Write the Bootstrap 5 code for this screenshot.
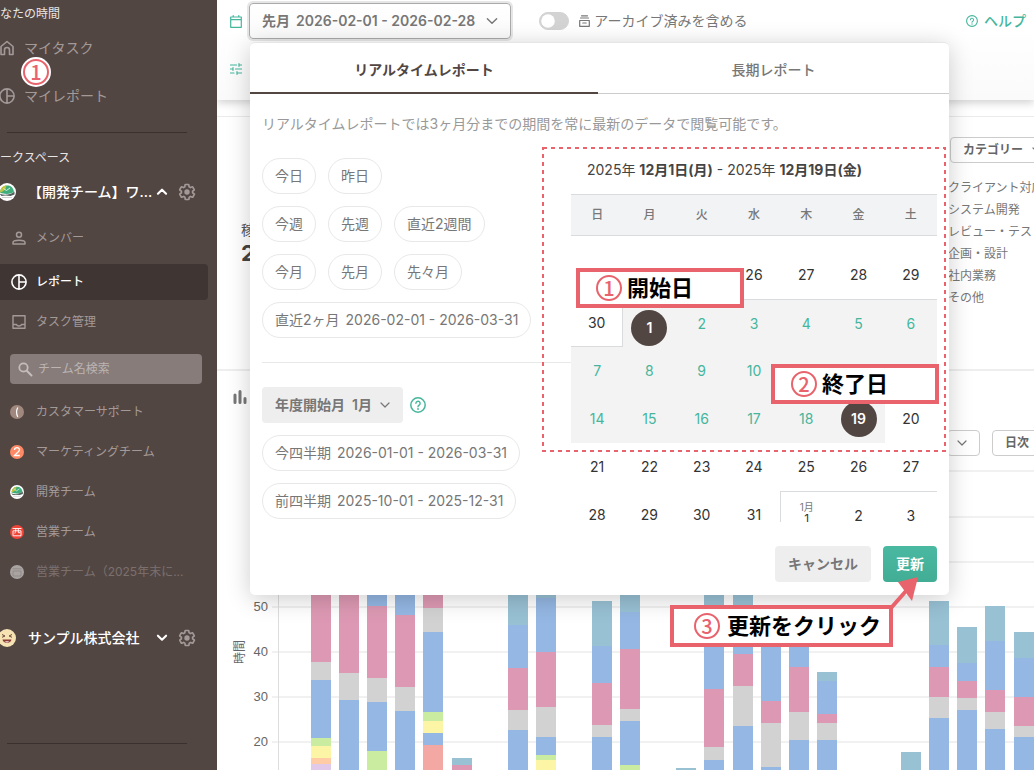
<!DOCTYPE html>
<html lang="ja">
<head>
<meta charset="utf-8">
<meta name="viewport" content="width=device-width, initial-scale=1">
<title>レポート</title>
<link href="https://cdn.jsdelivr.net/npm/bootstrap@5.3.0/dist/css/bootstrap.min.css" rel="stylesheet">
<style>
:root{--brown:#524643;--teal:#45b69d;--red:#e8636c;--line:#ebebeb}
body{font-family:Inter,"Noto Sans CJK JP",sans-serif;font-size:14px;line-height:20px;color:#777;background:#fff}
svg{flex:none;display:block}
.ln{fill:none;stroke:currentColor;stroke-linecap:round;stroke-linejoin:round}
a{text-decoration:none;color:inherit}
.side{width:217px;background:var(--brown);color:#a39a98;flex:none}
.side hr{margin:0 30px 0 7px;border-top:1px solid #3a302e;opacity:1}
.side-title{font-size:12px;color:#e8e5e4;height:28px}
.side-title.space{height:48px;padding-top:2px}
.side-main{height:40px;gap:9px}
.side-head{color:#fff;font-weight:500;height:22px;padding-right:21px;margin-bottom:17px}
.side-head.org{margin:35px 0 94px}
.side-head .face{margin-left:-2px}
.side-head .name{margin-left:12px;white-space:nowrap}
.side-head .act{margin:0 8px 0 auto}
.side-head .gear{color:#a39a98;margin-left:1px}
.side-item{height:36px;font-size:12px;padding-left:12px;gap:10px;margin-right:9px;border-radius:0 4px 4px 0}
.side-item.current{background:#3f3533;color:#fff;font-weight:500;padding-left:11px;gap:9px}
.team{height:40px;font-size:12px;padding-left:10px;gap:12px}
.team.faded{opacity:.5}
.search-box{margin:14px 15px 0 10px;height:30px}
.search-box input{height:30px;background:#877c7a;border:0;border-radius:4px;font-size:12px;color:#fff;padding:0 8px 2px 28px}
.search-box input::placeholder{color:#bbb4b2;opacity:1}
.search-box svg{left:8px;top:8px;color:#c3bdbb}
.main{min-width:0}
.top{height:100px;padding:3px 8px 0 13px;background:linear-gradient(#fff 30%,#fafafa);box-shadow:0 3px 8px rgba(0,0,0,.18)}
.top-row{height:36px}
.top-row + .top-row{margin-top:12px}
.teal{color:var(--teal)}
.period-btn{height:36px;padding:0 11px 0 12px;margin-left:7px;border:1px solid #aaa;box-shadow:0 0 0 2px #e6e6e6;border-radius:4px;background:linear-gradient(#fff,#fafafa);font-size:14px;font-weight:600;color:#777;line-height:20px}
.period-btn svg{margin-left:10px}
.form-switch .form-check-input.arch{width:30px;height:18px;margin:0;background-color:#d3d3d3;border-color:#d3d3d3;float:none;background-image:url("data:image/svg+xml,%3csvg xmlns='http://www.w3.org/2000/svg' viewBox='-4 -4 8 8'%3e%3ccircle r='3.4' fill='%23fff'/%3e%3c/svg%3e")}
.arch-label{padding-left:10px}
.summary{margin-top:16px;border-top:1px solid var(--line);height:253px}
.total{padding:103px 0 0 24px;line-height:20px;color:#555}
.total b{display:block;font-size:22px;line-height:26px;color:#444;font-weight:700}
.right-col{width:87px;flex:none}
.form-select{background-image:url("data:image/svg+xml,%3csvg xmlns='http://www.w3.org/2000/svg' viewBox='0 0 12 12'%3e%3cpath d='M2 4l4 4 4-4' fill='none' stroke='%23777' stroke-width='1.2' stroke-linecap='round' stroke-linejoin='round'/%3e%3c/svg%3e")}
.mini{height:26px;font-size:12px;line-height:16px;font-weight:600;color:#666;border:1px solid #ccc;border-radius:4px;padding:0 28px 0 12px;flex:none;background-color:#fff;background-size:12px 12px}
.cat-pick{width:106px;margin:20px 0 0 3px}
.legend-list{font-size:12px;line-height:22px;margin:14px 0 0 1px;white-space:nowrap;color:#777}
.chart-sec{border-top:2px solid #eee}
.chart-head{height:52px;padding-left:15px}
.chart-tools{gap:12px;height:26px;margin:7px 0 4px}
.mini.unit-pick{width:33px;padding:0;background-position:right 11px center}
.mini.step-pick{width:72px}
.pop{left:33px;top:42px;width:699px;height:553px;background:#fff;border-top:1px solid #e6e6e6;border-radius:5px;box-shadow:0 4px 24px rgba(0,0,0,.2);z-index:5}
.tab-btn{height:51px;border:0;border-bottom:1px solid #ccc;background:none;padding:4px 0 0;font-weight:500;color:#777}
.tab-btn.on{width:348px;border-bottom:2px solid var(--brown);font-weight:700;color:var(--brown)}
.note{margin:20px 12px 24px;color:#999}
.chips{width:321px;padding-left:12px;flex:none}
.chip-row{gap:12px;margin-bottom:12px}
.chip{height:36px;padding:0 12px;border:1px solid #e8e8e8;border-radius:18px;background:#fff;color:#777;white-space:nowrap}
.soft{height:36px;border:0;border-radius:4px;background-color:#eee;font-weight:600;color:#777;padding:0 13px}
.year-pick{width:141px;background-size:12px 12px;background-position:right 12px center;font-size:14px;line-height:20px;padding-left:13px}
.rule{height:1px;background:#e8e8e8;margin:24px 0}
.cal-side{width:366px;flex:none}
.cal-title{color:#444;padding-left:16px;line-height:24px}
.cal-title b{font-weight:700}
.cal-box{height:328px;overflow:hidden;margin-top:12px}
.cal{table-layout:fixed;width:100%;border-collapse:separate;border-spacing:0;text-align:center;color:#333}
.cal th{height:42px;background:#f2f3f5;border:solid #d9dbdd;border-width:1px 0;font-size:12px;font-weight:500;color:#777}
.cal td{height:48px;padding:0;vertical-align:middle}
.cal .gap td{height:15px}
.cal .in{background:#f3f3f3;color:var(--teal)}
.cal .bt{border-top:1px solid #d9dbdd}
.cal .last{border-right:1px solid #d9dbdd;border-bottom:1px solid #d9dbdd}
.cal .bl{border-left:1px solid #d9dbdd}
.cal .dot{display:inline-flex;width:36px;height:36px;border-radius:50%;background:var(--brown);color:#fff;font-weight:600;align-items:center;justify-content:center;vertical-align:middle}
.cal .dot.first{margin-top:8px}
.cal .turn{line-height:12px;font-size:12px;vertical-align:top;padding-top:9px}
.cal small{display:block;font-size:10px;line-height:12px;color:#777}
.foot{gap:12px;margin:15px 12px 0}
.go{height:36px;border:0;border-radius:4px;background:linear-gradient(#4ab9a2,#42ad95);color:#fff;font-weight:700;padding:0 13px}
.call{position:absolute;height:40px;border:4px solid var(--red);background:#fff;color:#000;font-size:22px;line-height:32px;font-weight:700;padding-left:16px;gap:5px;white-space:nowrap;z-index:3}
.num{width:26px;height:26px;border:2px solid var(--red);border-radius:50%;color:var(--red);font-family:"Noto Sans CJK JP",sans-serif;font-size:20px;line-height:20px;font-weight:500;display:inline-flex;align-items:center;justify-content:center;flex:none;background:#fff}
.side .num{position:absolute;left:23px;top:59px;box-shadow:0 0 0 2px #fff}
.c1{left:326px;top:225px;width:168px}
.c2{left:521px;top:321px;width:168px}
.c3{left:420px;top:562px;width:223px;height:42px;padding-left:20px;gap:7px}
.dash{position:absolute;left:292px;top:104px}
.arrow{position:absolute;left:636px;top:534px;z-index:4}
.date-gap{margin-left:6px}
</style>
</head>
<body>
<svg class="d-none">
  <symbol id="pie" viewBox="0 0 16 16"><path class="ln" stroke-width="1.6" d="M8 .9a7.1 7.1 0 1 0 0 14.2A7.1 7.1 0 1 0 8 .9zM8 1v14M8 8h7"/></symbol>
  <symbol id="gear" viewBox="0 0 24 24"><path class="ln" stroke-width="2.2" d="M19.4 13c.1-.6.1-1.4 0-2l2.1-1.6c.2-.2.2-.4.1-.6l-2-3.5c-.1-.2-.4-.3-.6-.2l-2.5 1c-.5-.4-1.1-.7-1.7-1l-.4-2.7c0-.2-.2-.4-.5-.4h-4c-.2 0-.4.2-.5.4L9.100 5.100c-.6.2-1.100.6-1.700 1l-2.500-1c-.2-.1-.5 0-.6.2l-2 3.500c-.1.2-.1.5.1.6L4.600 11c-.1.7-.1 1.3 0 2l-2.100 1.600c-.2.2-.2.4-.1.6l2 3.500c.1.2.4.3.6.2l2.500-1c.5.4 1.100.7 1.700 1l.4 2.700c0 .2.2.4.5.4h4c.2 0 .4-.2.5-.4l.4-2.700c.6-.2 1.100-.6 1.700-1l2.500 1c.2.1.5 0 .6-.2l2-3.500c.1-.2.1-.5-.1-.6z"/><circle cx="12" cy="12" r="3.600" fill="currentColor"/></symbol>
  <symbol id="help" viewBox="0 0 16 16"><circle class="ln" stroke-width="1.500" cx="8" cy="8" r="7.200"/><path class="ln" stroke-width="1.400" d="M5.900 6.300a2.100 2.100 0 1 1 3.400 1.700C8.500 8.600 8 8.900 8 9.700"/><circle cx="8" cy="12" r=".9" fill="currentColor"/></symbol>
  <symbol id="chev" viewBox="0 0 12 12"><path class="ln" stroke-width="1.200" d="M2 4l4 4 4-4"/></symbol>
  <symbol id="hill" viewBox="0 0 18 18"><circle cx="9" cy="9" r="9" fill="#fff"/><path d="M2 9.500C2.500 1 14.500-.5 16 8.500c-2 2.500-9 3.500-14 1z" fill="#3fae7c"/><path d="M2 9.500C2.500 5 5 2.500 8.500 2.200c-1 3 0 5-6.500 7.300z" fill="#c5c43e"/><path d="M1.500 10.500c4.500 2 10.500 1.500 15-2v3l-4 1.500-5-.5-4 .5z" fill="#53605d"/><path d="M5.500 5.500l3 2 3.500-2.500" fill="none" stroke="#d9f3e1" stroke-width="1"/><path d="M4 14.500h10" stroke="#bbb" stroke-width=".7"/></symbol>
</svg>

<div class="d-flex vh-100 overflow-hidden">
  <nav class="side position-relative overflow-hidden">
    <div class="side-title d-flex align-items-center">なたの時間</div>
    <a href="#" class="side-main d-flex align-items-center">
      <svg width="15" height="16" viewBox="0 0 15 16"><path class="ln" stroke-width="1.600" d="M1 6.500l6-5 6 5v8H9.500V10a2.500 2.500 0 0 0-5 0v4.500H1z"/></svg>マイタスク</a>
    <a href="#" class="side-main d-flex align-items-center mt-2"><svg width="15" height="16" viewBox="1 0 15 16"><use href="#pie" width="16" height="16"/></svg>マイレポート</a>
    <span class="num">1</span>
    <hr class="mt-3">
    <div class="side-title space d-flex align-items-center">ークスペース</div>
    <div class="side-head d-flex align-items-center">
      <svg class="face" width="18" height="18"><use href="#hill"/></svg>
      <span class="name">【開発チーム】ワ...</span>
      <svg class="act" width="14" height="14" viewBox="0 0 12 12"><path class="ln" stroke-width="1.800" d="M2.500 7.500L6 4l3.500 3.500"/></svg>
      <svg class="gear" width="18" height="18"><use href="#gear"/></svg>
    </div>
    <a href="#" class="side-item d-flex align-items-center"><svg width="14" height="14" viewBox="0 0 14 14"><circle class="ln" stroke-width="1.500" cx="7" cy="3.700" r="2.500"/><path class="ln" stroke-width="1.500" d="M1 13v-1.500C1 8.500 13 8.500 13 11.500V13z"/></svg>メンバー</a>
    <a href="#" class="side-item current d-flex align-items-center mt-2"><svg width="16" height="16"><use href="#pie"/></svg>レポート</a>
    <a href="#" class="side-item d-flex align-items-center mt-1"><svg width="14" height="14" viewBox="0 0 14 14"><path class="ln" stroke-width="1.400" d="M1 .8h12v12.400H1zM1 9.500h3.500c.5 2 4.500 2 5 0H13"/></svg>タスク管理</a>
    <div class="search-box position-relative">
      <svg class="position-absolute" width="15" height="15" viewBox="0 0 15 15"><circle class="ln" stroke-width="1.800" cx="5.500" cy="5.500" r="4.200"/><path class="ln" stroke-width="2" d="M8.800 8.800L13.500 13.500"/></svg>
      <input class="form-control" type="search" aria-label="チーム名検索" placeholder="チーム名検索">
    </div>
    <div class="mt-2">
      <a href="#" class="team d-flex align-items-center"><svg width="14" height="14" viewBox="0 0 14 14"><circle cx="7" cy="7" r="7" fill="#a1887f"/><path d="M7.800 2.500q-2.500 4.500 0 9.500" fill="none" stroke="#fff" stroke-width="1.200"/></svg>カスタマーサポート</a>
      <a href="#" class="team d-flex align-items-center"><svg width="14" height="14" viewBox="0 0 14 14"><circle cx="7" cy="7" r="7" fill="#ff8a65"/><path d="M4.500 5c0-3 5-3 5-.2 0 2-3 3.200-5 5.700h5.300" fill="none" stroke="#fff" stroke-width="1.300"/></svg>マーケティングチーム</a>
      <a href="#" class="team d-flex align-items-center"><svg width="14" height="14"><use href="#hill"/></svg>開発チーム</a>
      <a href="#" class="team d-flex align-items-center"><svg width="14" height="14" viewBox="0 0 14 14"><circle cx="7" cy="7" r="7" fill="#f04438"/><path d="M2.500 3.500h9M3 5.800h8v5H3zM5.700 3.700v2.600L4.800 8.500M8.300 3.700v4h2" fill="none" stroke="#fff" stroke-width=".9"/></svg>営業チーム</a>
      <a href="#" class="team faded d-flex align-items-center"><svg width="14" height="14" viewBox="0 0 14 14"><circle cx="7" cy="7" r="7" fill="#fff"/><path d="M2.500 3.800h9M3 6h8v5H3z" fill="none" stroke="#bbb" stroke-width=".7"/></svg>営業チーム（2025年末に...</a>
    </div>
    <div class="side-head org d-flex align-items-center">
      <svg class="face" width="18" height="18" viewBox="0 0 18 18"><circle cx="9" cy="9" r="9" fill="#f6e3b4"/><path d="M4 5.500l3 1.500-3 1.300M14 5.500L11 7l3 1.300" fill="none" stroke="#6b4a3a"/><path d="M4.500 10.500h9c-.5 4.500-8.500 4.500-9 0z" fill="#8a3b34"/><path d="M6.500 12.800c1.500-.8 3.500-.8 5 0-1.500 1-3.500 1-5 0z" fill="#fff"/></svg>
      <span class="name">サンプル株式会社</span>
      <svg class="act" width="14" height="14" viewBox="0 0 12 12"><path class="ln" stroke-width="1.800" d="M2.500 4L6 7.500 9.500 4"/></svg>
      <svg class="gear" width="18" height="18"><use href="#gear"/></svg>
    </div>
    <hr>
    <a href="#" class="d-block ps-4 pt-4">個人設定</a>
  </nav>

  <main class="main flex-grow-1 position-relative overflow-hidden">
    <header class="top">
      <div class="top-row d-flex align-items-center">
        <svg class="teal" width="12" height="13" viewBox="0 0 12 13"><path class="ln" stroke-width="1.200" d="M.7 2h10.600v10.300H.7zM.7 4.700h10.600M3.200.6V2M8.800.6V2"/></svg>
        <button type="button" class="period-btn d-flex align-items-center">先月<span class="date-gap">2026-02-01 - 2026-02-28</span><svg width="14" height="14"><use href="#chev"/></svg></button>
        <div class="form-check form-switch d-flex align-items-center p-0 m-0 ms-4">
          <input class="form-check-input arch ms-1" type="checkbox" role="switch" id="arch">
          <label for="arch" class="arch-label d-flex align-items-center"><svg class="me-1" width="11" height="12" viewBox="0 0 11 12"><path class="ln" stroke-width="1.200" d="M2.500.8h6M1.500 3h8M.7 5.500h9.600v5.800H.7zM3.800 8h3.400"/></svg>アーカイブ済みを含める</label>
        </div>
        <a href="#" class="teal ms-auto d-flex align-items-center fw-medium"><svg width="12" height="12" style="margin-right:6px"><use href="#help"/></svg>ヘルプ</a>
      </div>
      <div class="top-row d-flex align-items-center">
        <svg class="teal" width="12" height="12" viewBox="0 0 12 12"><path class="ln" stroke-width="1.200" d="M.5 2h6M9 2h2.500M9 .7v2.600M.5 6H3M5.500 6h6M3 4.700v2.600M.5 10H4M7 10h4.500M7 8.700v2.600"/></svg>
      </div>
    </header>

    <section class="summary d-flex">
      <div class="total">稼<b>2</b></div>
      <div class="right-col ms-auto">
        <select class="form-select mini cat-pick" aria-label="カテゴリー"><option>カテゴリー</option></select>
        <ul class="legend-list list-unstyled"><li>クライアント対応</li><li>システム開発</li><li>レビュー・テスト</li><li>企画・設計</li><li>社内業務</li><li>その他</li></ul>
      </div>
    </section>

    <section class="chart-sec">
      <div class="chart-head d-flex align-items-center"><svg width="16" height="14" viewBox="0 0 16 14"><path d="M3 5v7.500M8 1.500v11M13 8.500v4" fill="none" stroke="#777" stroke-width="3" stroke-linecap="round"/></svg></div>
      <div class="d-flex justify-content-end"><div class="right-col chart-tools d-flex">
        <select class="form-select mini unit-pick" aria-label="単位"><option></option></select>
        <select class="form-select mini step-pick" aria-label="集計"><option>日次</option></select>
      </div></div>
      <svg id="chart" width="100%" height="310" font-family="Liberation Sans, sans-serif" font-size="13" fill="#666"></svg>
    </section>

    <div class="pop position-absolute">
      <div class="d-flex" role="tablist">
        <button type="button" class="tab-btn on" role="tab">リアルタイムレポート</button>
        <button type="button" class="tab-btn flex-grow-1" role="tab">長期レポート</button>
      </div>
      <p class="note">リアルタイムレポートでは3ヶ月分までの期間を常に最新のデータで閲覧可能です。</p>
      <div class="d-flex">
        <div class="chips">
          <div class="chip-row d-flex"><button class="chip">今日</button><button class="chip">昨日</button></div>
          <div class="chip-row d-flex"><button class="chip">今週</button><button class="chip">先週</button><button class="chip">直近2週間</button></div>
          <div class="chip-row d-flex"><button class="chip">今月</button><button class="chip">先月</button><button class="chip">先々月</button></div>
          <div class="chip-row d-flex"><button class="chip">直近2ヶ月<span class="date-gap">2026-02-01 - 2026-03-31</span></button></div>
          <div class="rule"></div>
          <div class="chip-row d-flex align-items-center">
            <select class="form-select soft year-pick" aria-label="年度開始月"><option>年度開始月&nbsp; 1月</option></select>
            <svg class="teal" style="margin-left:-5px" width="16" height="16"><use href="#help"/></svg>
          </div>
          <div class="chip-row d-flex"><button class="chip">今四半期<span class="date-gap">2026-01-01 - 2026-03-31</span></button></div>
          <div class="chip-row d-flex"><button class="chip">前四半期<span class="date-gap">2025-10-01 - 2025-12-31</span></button></div>
        </div>
        <div class="cal-side">
          <div class="cal-title">2025年 <b>12月1日(月)</b> - 2025年 <b>12月19日(金)</b></div>
          <div class="cal-box">
            <table class="cal">
              <thead><tr><th>日</th><th>月</th><th>火</th><th>水</th><th>木</th><th>金</th><th>土</th></tr></thead>
              <tbody>
                <tr class="gap"><td colspan="7"></td></tr>
                <tr><td></td><td></td><td></td><td>26</td><td>27</td><td>28</td><td>29</td></tr>
                <tr><td class="last">30</td><td class="in bt"><span class="dot first">1</span></td><td class="in bt">2</td><td class="in bt">3</td><td class="in bt">4</td><td class="in bt">5</td><td class="in bt">6</td></tr>
                <tr><td class="in">7</td><td class="in">8</td><td class="in">9</td><td class="in">10</td><td class="in"></td><td class="in"></td><td class="in"></td></tr>
                <tr><td class="in">14</td><td class="in">15</td><td class="in">16</td><td class="in">17</td><td class="in">18</td><td class="in"><span class="dot">19</span></td><td>20</td></tr>
                <tr><td>21</td><td>22</td><td>23</td><td>24</td><td>25</td><td>26</td><td>27</td></tr>
                <tr><td>28</td><td>29</td><td>30</td><td>31</td><td class="bt bl turn"><small>1月</small>1</td><td class="bt">2</td><td class="bt">3</td></tr>
              </tbody>
            </table>
          </div>
        </div>
      </div>
      <div class="foot d-flex justify-content-end"><button type="button" class="soft">キャンセル</button><button type="button" class="go">更新</button></div>

      <svg class="dash" width="404" height="306"><rect x="1" y="1" width="402" height="303" fill="none" stroke="#e8636c" stroke-width="2" stroke-dasharray="4 4"/></svg>
      <div class="call c1 d-flex align-items-center"><span class="num">1</span>開始日</div>
      <div class="call c2 d-flex align-items-center"><span class="num">2</span>終了日</div>
      <div class="call c3 d-flex align-items-center"><span class="num">3</span>更新をクリック</div>
      <svg class="arrow" width="34" height="36" viewBox="0 0 34 36"><path d="M5 31L20 14" stroke="#e8636c" stroke-width="4"/><path d="M32 0L12 5 26 24z" fill="#e8636c"/></svg>
    </div>
  </main>
</div>

<script>
// Stacked daily bars: slot, top, then [colour, lower edge] pairs
const C={t:'#98c1d4',b:'#94b7e3',p:'#dd99b3',g:'#d2d2d2',n:'#c9eca1',y:'#fdf5a6',o:'#ffcca5',l:'#e0c9e9',s:'#f4a8a3'};
const bars=[
[0,90,'p202 g220 b278 n286 y298 o304 l310'],[1,90,'p213 g240 b310'],[2,90,'b146 p218 g242 b291 n310'],
[3,90,'b155 p227 g251 b310'],[4,90,'p148 g172 b252 n261 y273 b285 s310'],[5,298,'t305 p310'],
[7,90,'t165 b208 p250 g270 b310'],[8,90,'t138 b192 p247 g277 b295 n300 y310'],[10,141,'t186 b223 p265 g277 b310'],
[11,90,'t152 b189 p249 g261 b305 n310'],[13,308,'t310'],[14,90,'t150 b229 p287 g300 b310'],[15,90,'t150 b194 p226 g266 b310'],
[16,155,'b241 p263 g307 b310'],[17,155,'b207 p252 g280 b310'],[18,212,'t221 b254 p263 g280 b310'],[21,292,'t310'],
[22,141,'t185 b207 p237 g258 b310'],[23,167,'t203 b221 p238 g250 b310'],[24,146,'t181 b230 p252 g269 b310'],[25,172,'t198 b237 p266 g277 b310']];
let s='';
[11,57,102,147,192,237,282].forEach(y=>s+=`<rect x="55" y="${y-1}" width="100%" height="2" fill="#f1f1f1"/>`);
s+='<rect x="61" y="11" width="1" height="299" fill="#ddd"/>';
[50,40,30,20].forEach((v,i)=>s+=`<text x="51" y="${151+45*i}" text-anchor="end">${v}</text>`);
s+='<text transform="translate(27 192) rotate(-90)" text-anchor="middle" font-size="12" font-family="Noto Sans CJK JP">時間</text>';
bars.forEach(([i,top,d])=>{const x=Math.round(94+i*28.1);let y=top;
 d.split(' ').forEach(p=>{const e=+p.slice(1);s+=`<rect x="${x}" y="${y}" width="20" height="${e-y}" fill="${C[p[0]]}"/>`;y=e;});});
document.getElementById('chart').innerHTML=s;
</script>
<script src="https://cdn.jsdelivr.net/npm/bootstrap@5.3.0/dist/js/bootstrap.bundle.min.js"></script>
</body>
</html>
